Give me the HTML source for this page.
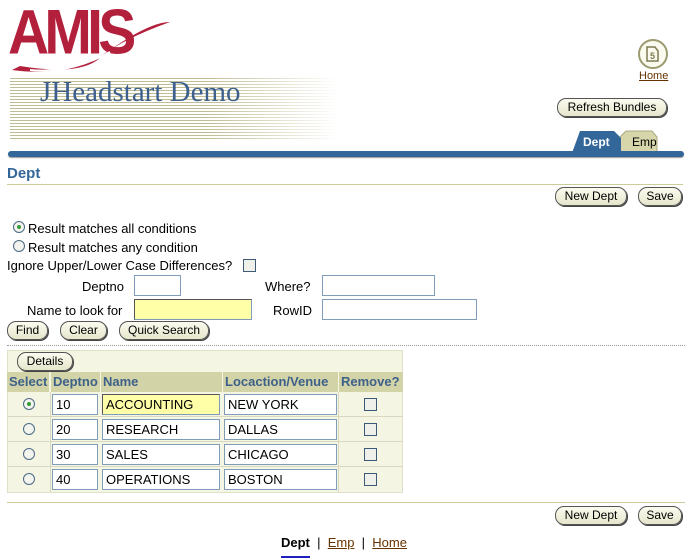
<!DOCTYPE html>
<html><head><meta charset="utf-8"><style>
*{box-sizing:border-box;margin:0;padding:0}
body{width:690px;height:558px;background:#fff;font-family:"Liberation Sans",Arial,sans-serif;font-size:12px;color:#000;position:relative;overflow:hidden}
.a{position:absolute}
.btn{position:absolute;height:19px;border:1px solid #555;border-radius:9px;background:linear-gradient(#fbfbf0,#e6e6cc);font-size:12px;line-height:17px;text-align:center;box-shadow:1px 1px 0 #444}
.inp{position:absolute;border:1px solid #7f9db9;background:#fff;height:21px;font-size:13px;line-height:19px;padding-left:3px}
.yel{background:#ffffa8;border-top-color:#555;border-left-color:#555}
.rad{position:absolute;width:12px;height:12px;border:1px solid #4b6a86;border-radius:50%;background:#f4f4ee}
.rad.on::after{content:"";position:absolute;left:3px;top:3px;width:4px;height:4px;border-radius:50%;background:#3a9a3a}
.chk{position:absolute;width:13px;height:13px;border:1px solid #3c5a78;background:#f0f0ea}
.hd{position:absolute;top:372px;height:20px;background:#d3d3a8;color:#3d6189;font-weight:bold;font-size:13px;line-height:20px;padding-left:2px}
</style></head><body>
<div class="a" style="left:0;top:0;width:340px;height:145px;overflow:hidden">
<div class="a" style="left:10px;top:78px;width:330px;height:62px;background:repeating-linear-gradient(#c0bd94 0 1px,#fff 1px 3px);-webkit-mask:linear-gradient(90deg,#000 60%,transparent)"></div>
<div class="a" style="left:8px;top:-2px;font:bold 60px/66px 'Liberation Sans',sans-serif;color:#b3203c;letter-spacing:-5px;transform:scale(.95,1.05);transform-origin:left top">AMIS</div>
<svg class="a" style="left:10px;top:20px" width="160" height="55"><path d="M2 50 Q60 58 100 30 T160 2 Q110 20 90 38 T10 46Z" fill="#b3203c"/><path d="M20 50 Q60 54 100 32" stroke="#fff" stroke-width="2" fill="none"/></svg>
<div class="a" style="left:40px;top:76px;font:29px 'Liberation Serif',serif;color:#3d5f8e">JHeadstart Demo</div>
</div>
<svg class="a" style="left:637px;top:38px" width="32" height="32"><circle cx="16" cy="16" r="14" fill="#fafaee" stroke="#9c9a70" stroke-width="2"/><path d="M10 9h8l3 4v10h-11z" fill="none" stroke="#7c7a50" stroke-width="1.5"/><text x="13" y="21" font-size="9" font-family="Liberation Sans" fill="#7c7a50" font-weight="bold">5</text></svg>
<div class="a" style="left:639px;top:70px;font-size:11px;color:#663300;text-decoration:underline">Home</div>
<div class="btn" style="left:557px;top:98px;width:110px">Refresh Bundles</div>
<svg class="a" style="left:570px;top:129px" width="92" height="24"><path d="M50 8 L56 2 H82 L87 8 V24 H50Z" fill="#d6d6aa" stroke="#a8a880"/><path d="M2 24 L10 2 H44 L51 9 V24Z" fill="#336699"/></svg>
<div class="a" style="left:583px;top:135px;color:#fff;font-weight:bold;font-size:12px">Dept</div>
<div class="a" style="left:632px;top:135px;font-size:12px">Emp</div>
<div class="a" style="left:8px;top:151px;width:676px;height:6px;background:#336699;border-radius:3px;box-shadow:0 1px 1px #999"></div>
<div class="a" style="left:7px;top:165px;font-weight:bold;font-size:15px;color:#336699">Dept</div>
<div class="a" style="left:7px;top:184px;width:676px;height:1px;background:#cccc99"></div>
<div class="btn" style="left:555px;top:187px;width:72px">New Dept</div>
<div class="btn" style="left:638px;top:187px;width:44px">Save</div>
<div class="rad on" style="left:13px;top:221px"></div>
<div class="a" style="left:28px;top:221px;font-size:13px">Result matches all conditions</div>
<div class="rad" style="left:13px;top:240px"></div>
<div class="a" style="left:28px;top:240px;font-size:13px">Result matches any condition</div>
<div class="a" style="left:7px;top:258px;font-size:13px">Ignore Upper/Lower Case Differences?</div>
<div class="chk" style="left:243px;top:259px"></div>
<div class="a" style="left:82px;top:279px;font-size:13px">Deptno</div>
<div class="inp" style="left:134px;top:275px;width:47px"></div>
<div class="a" style="left:265px;top:279px;font-size:13px">Where?</div>
<div class="inp" style="left:322px;top:275px;width:113px"></div>
<div class="a" style="left:27px;top:303px;font-size:13px">Name to look for</div>
<div class="inp yel" style="left:134px;top:299px;width:118px"></div>
<div class="a" style="left:273px;top:303px;font-size:13px">RowID</div>
<div class="inp" style="left:322px;top:299px;width:155px"></div>
<div class="btn" style="left:7px;top:321px;width:41px">Find</div>
<div class="btn" style="left:60px;top:321px;width:47px">Clear</div>
<div class="btn" style="left:119px;top:321px;width:90px">Quick Search</div>
<div class="a" style="left:7px;top:345px;width:678px;border-top:1px dotted #999"></div>
<div class="a" style="left:7px;top:350px;width:396px;height:143px;background:#f5f5e3;border:1px solid #e0e0c8"></div>
<div class="btn" style="left:17px;top:352px;width:56px">Details</div>
<div class="hd" style="left:7px;width:42px">Select</div>
<div class="hd" style="left:51px;width:49px">Deptno</div>
<div class="hd" style="left:101px;width:121px">Name</div>
<div class="hd" style="left:223px;width:115px">Locaction/Venue</div>
<div class="hd" style="left:339px;width:64px">Remove?</div>
<div class="a" style="left:7px;top:416px;width:396px;border-top:1px solid #d8d8c0"></div>
<div class="a" style="left:7px;top:441px;width:396px;border-top:1px solid #d8d8c0"></div>
<div class="a" style="left:7px;top:466px;width:396px;border-top:1px solid #d8d8c0"></div>
<div class="a" style="left:50px;top:392px;height:100px;border-left:1px solid #d8d8c0"></div>
<div class="a" style="left:338px;top:392px;height:100px;border-left:1px solid #d8d8c0"></div>
<div class="rad on" style="left:23px;top:398px"></div>
<div class="inp" style="left:52px;top:394px;width:46px">10</div>
<div class="inp yel" style="left:102px;top:394px;width:118px">ACCOUNTING</div>
<div class="inp" style="left:224px;top:394px;width:113px">NEW YORK</div>
<div class="chk" style="left:364px;top:398px"></div>
<div class="rad" style="left:23px;top:423px"></div>
<div class="inp" style="left:52px;top:419px;width:46px">20</div>
<div class="inp" style="left:102px;top:419px;width:118px">RESEARCH</div>
<div class="inp" style="left:224px;top:419px;width:113px">DALLAS</div>
<div class="chk" style="left:364px;top:423px"></div>
<div class="rad" style="left:23px;top:448px"></div>
<div class="inp" style="left:52px;top:444px;width:46px">30</div>
<div class="inp" style="left:102px;top:444px;width:118px">SALES</div>
<div class="inp" style="left:224px;top:444px;width:113px">CHICAGO</div>
<div class="chk" style="left:364px;top:448px"></div>
<div class="rad" style="left:23px;top:473px"></div>
<div class="inp" style="left:52px;top:469px;width:46px">40</div>
<div class="inp" style="left:102px;top:469px;width:118px">OPERATIONS</div>
<div class="inp" style="left:224px;top:469px;width:113px">BOSTON</div>
<div class="chk" style="left:364px;top:473px"></div>
<div class="a" style="left:7px;top:502px;width:678px;height:1px;background:#cccc99"></div>
<div class="btn" style="left:555px;top:506px;width:72px">New Dept</div>
<div class="btn" style="left:638px;top:506px;width:44px">Save</div>
<div class="a" style="left:281px;top:535px;font-size:13px"><b>Dept</b>&nbsp; | &nbsp;<span style="color:#663300;text-decoration:underline">Emp</span>&nbsp; | &nbsp;<span style="color:#663300;text-decoration:underline">Home</span></div>
<div class="a" style="left:281px;top:556px;width:29px;height:2px;background:#2020c0"></div>
</body></html>
